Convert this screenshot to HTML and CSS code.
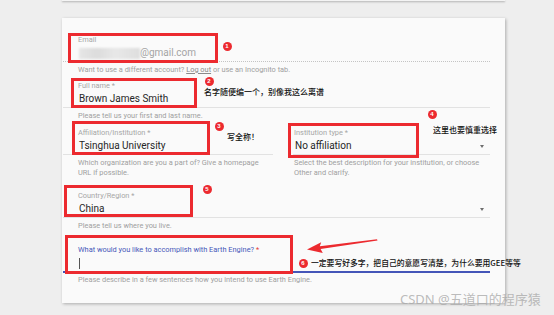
FILE: index.html
```html
<!DOCTYPE html>
<html>
<head>
<meta charset="utf-8">
<link rel="stylesheet" href="styles.css">
</head>
<body>
<div class="page">
  <div class="topcard"></div>
  <form class="card">
    <div class="field ext dotted">
      <div class="label">Email</div>
      <div class="value muted"><span class="blur"></span>@gmail.com</div>
    </div>
    <div class="help">Want to use a different account? <u>Log out</u> or use an Incognito tab.</div>

    <div class="group">
      <div class="field ext">
        <div class="label">Full name *</div>
        <div class="value">Brown James Smith</div>
      </div>
      <div class="help">Please tell us your first and last name.</div>
    </div>

    <div class="group row">
      <div class="col">
        <div class="field ext">
          <div class="label">Affiliation/Institution *</div>
          <div class="value">Tsinghua University</div>
        </div>
        <div class="help">Which organization are you a part of? Give a homepage URL if possible.</div>
      </div>
      <div class="col">
        <div class="field">
          <div class="label">Institution type *</div>
          <div class="value select">No affiliation<span class="caret"></span></div>
        </div>
        <div class="help">Select the best description for your institution, or choose Other and clarify.</div>
      </div>
    </div>

    <div class="group country">
      <div class="field ext">
        <div class="label">Country/Region *</div>
        <div class="value select">China<span class="caret"></span></div>
      </div>
      <div class="help">Please tell us where you live.</div>
    </div>

    <div class="group goal">
      <div class="field ext focused">
        <div class="label blue">What would you like to accomplish with Earth Engine? <span class="req">*</span></div>
        <div class="value"><span class="cursor"></span></div>
      </div>
      <div class="help tight">Please describe in a few sentences how you intend to use Earth Engine.</div>
    </div>
  </form>

  <div class="box b1"></div>
  <div class="box b2"></div>
  <div class="box b3"></div>
  <div class="box b4"></div>
  <div class="box b5"></div>
  <div class="box b6"></div>

  <span class="badge n1">1</span>
  <span class="badge n2">2</span>
  <span class="badge n3">3</span>
  <span class="badge n4">4</span>
  <span class="badge n5">5</span>
  <span class="badge n6">6</span>

  <span class="note t2">名字随便编一个，别像我这么离谱</span>
  <span class="note t3">写全称！</span>
  <span class="note t4">这里也要慎重选择</span>
  <span class="note t6">一定要写好多字，把自己的意愿写清楚，为什么要用GEE等等</span>

  <svg class="arrow" width="85" height="25" viewBox="0 0 85 25">
    <polygon fill="#ec2a2f" points="7,14.5 21.2,7.2 19.8,11.2 77,4.3 77.5,5.6 20.6,14 22.8,18"/>
  </svg>

  <span class="watermark">CSDN @五道口的程序猿</span>
</div>
</body>
</html>
```

FILE: styles.css
```css
* { box-sizing: border-box; }
html, body { margin: 0; padding: 0; }
body {
  background: #eeeeee;
  font-family: Roboto, "Noto Sans", "Noto Sans CJK SC", sans-serif;
}
.page {
  position: relative;
  width: 554px;
  height: 315px;
  overflow: hidden;
  padding-left: 62px;
}
.topcard {
  width: 443px;
  height: 1px;
  background: #f4f4f4;
  box-shadow: 0 1px 2px rgba(0,0,0,0.35);
}
.card {
  width: 443px;
  height: 285px;
  margin-top: 17px;
  background: #fafafa;
  box-shadow: 1px 1px 3px rgba(0,0,0,0.28);
  padding: 17px 15px 0 15px;
}
.field {
  border-bottom: 1px solid #e2e2e2;
  padding-left: 1px;
}
.field.ext {
  margin-left: -14px;
  padding-left: 15px;
}
.field.dotted {
  border-bottom: 1px dotted #c4c4c4;
}
.field.focused {
  border-bottom: 2px solid #4455b8;
}
.label {
  font-size: 7.4px;
  line-height: 10px;
  color: #a6a6a6;
  white-space: nowrap;
}
.label.blue { color: #4657b9; }
.req { color: #e53935; }
.value {
  font-size: 10px;
  line-height: 16px;
  height: 16px;
  color: #262626;
  padding-left: 1px;
  display: flex;
  align-items: center;
}
.value.muted { color: #a4a4a4; }
.value.select { justify-content: space-between; }
.caret {
  width: 0;
  height: 0;
  border-left: 2.5px solid transparent;
  border-right: 2.5px solid transparent;
  border-top: 3px solid #6e6e6e;
  margin-right: 6px;
}
.blur {
  display: inline-block;
  width: 61px;
  height: 11px;
  background: linear-gradient(90deg, #e6e6e6, #dcdcdc 30%, #e8e8e8 60%, #dedede);
  filter: blur(1px);
}
.cursor {
  display: inline-block;
  width: 1px;
  height: 11px;
  background: #555;
}
.help {
  font-size: 7.4px;
  line-height: 10px;
  color: #a0a0a0;
  margin-top: 3px;
  padding-left: 1px;
}
.help.tight { margin-top: 2px; }
.help u { color: #8a8a8a; }
.group { margin-top: 6px; }
.row {
  margin-top: 7px;
  display: grid;
  grid-template-columns: 196px 197px;
  column-gap: 20px;
}
.country { margin-top: 13px; }
.goal { margin-top: 14px; }

/* annotations */
.box {
  position: absolute;
  border: 3px solid #ec2a2f;
}
.b1 { left: 68px; top: 33px; width: 150px; height: 30px; }
.b2 { left: 71px; top: 78px; width: 126px; height: 30px; }
.b3 { left: 72px; top: 121px; width: 138px; height: 34px; }
.b4 { left: 288px; top: 123px; width: 131px; height: 35px; }
.b5 { left: 64px; top: 185px; width: 129px; height: 32px; }
.b6 { left: 65px; top: 235px; width: 228px; height: 39px; }

.badge {
  position: absolute;
  width: 9px;
  height: 9px;
  margin: -4.5px 0 0 -4.5px;
  border-radius: 50%;
  background: #ec2a2f;
  color: #fff;
  font-family: "Liberation Sans", sans-serif;
  font-size: 6px;
  font-weight: 700;
  line-height: 9px;
  text-align: center;
}
.n1 { left: 227px; top: 46px; }
.n2 { left: 209px; top: 81px; }
.n3 { left: 219px; top: 126px; }
.n4 { left: 432px; top: 114px; }
.n5 { left: 207px; top: 189px; }
.n6 { left: 303px; top: 263px; }

.note {
  position: absolute;
  font-family: "Noto Sans CJK SC", sans-serif;
  font-size: 8px;
  line-height: 10px;
  font-weight: 500;
  color: #111;
  white-space: nowrap;
}
.t2 { left: 204px; top: 87px; }
.t3 { left: 227px; top: 132px; }
.t4 { left: 433px; top: 125px; }
.t6 { left: 311px; top: 258px; font-size: 7.8px; }

.arrow {
  position: absolute;
  left: 300px;
  top: 235px;
}
.watermark {
  position: absolute;
  left: 400px;
  top: 290px;
  font-family: "Noto Sans", "Noto Sans CJK SC", sans-serif;
  font-size: 13px;
  line-height: 18px;
  color: rgba(170,170,170,0.8);
  white-space: nowrap;
}
```
